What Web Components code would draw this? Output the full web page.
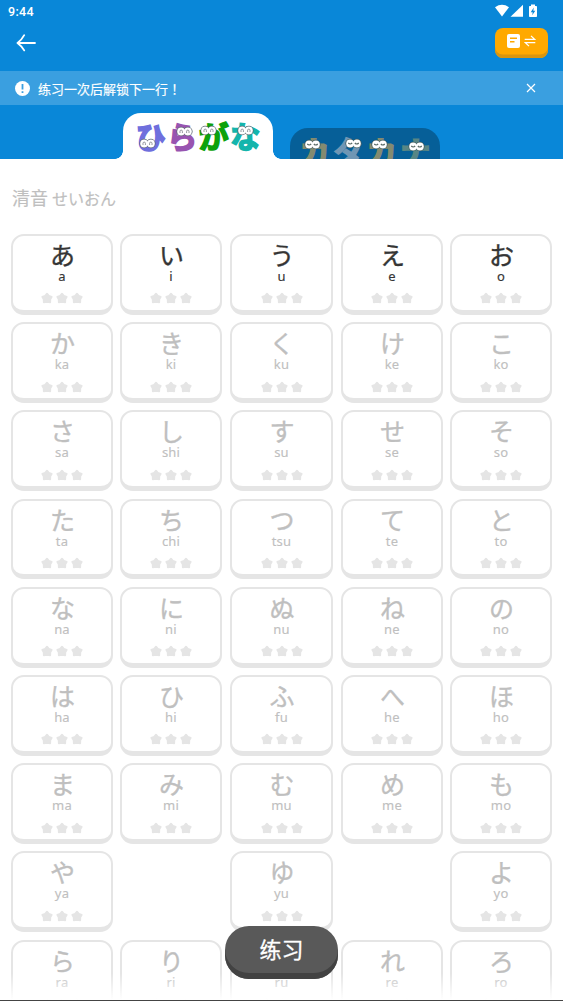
<!DOCTYPE html>
<html lang="zh-CN">
<head>
<meta charset="utf-8">
<title>五十音</title>
<style>
    html, body {
        margin: 0;
        height: 1001px;
        overflow: hidden;
        background: #fff;
        font-family: "Noto Sans", "Noto Sans CJK SC", sans-serif;
    }
</style>
</head>
<body>
<kana-app></kana-app>

<script>
    function define(name, html, setup) {
        var template = document.createElement('template');
        template.innerHTML = html;
        customElements.define(name, class extends HTMLElement {
            constructor() {
                super();
                this.attachShadow({mode: 'open'}).appendChild(template.content.cloneNode(true));
            }
            connectedCallback() {
                if (setup) {
                    setup(this, this.shadowRoot);
                }
            }
        });
    }

    define('status-bar', `
        <style>
            :host {
                display: flex;
                justify-content: space-between;
                height: 24px;
                padding: 0 24px 0 8px;
                color: #fff;
                font: 500 12.5px/24px Roboto, sans-serif;
                letter-spacing: .35px;
            }
            svg { display: block; margin-top: 4px; }
        </style>
        <span>9:44</span>
        <svg width="44" height="14" viewBox="0 0 44 14" fill="#fff">
            <path d="M0 3.3Q7 -1.6 14 3.3L7 12.4Z"/>
            <path d="M28 .8V12.8H15.5Z"/>
            <path d="M36 .4h4v1.5h1.2q.8 0 .8.8v9.5q0 .8-.8.8h-6.4q-.8 0-.8-.8V2.7q0-.8.8-.8H36z"/>
            <path d="M38.8 3.6l-3.1 4.6h2l-.5 3 3.1-4.4h-2z" fill="#0987d8"/>
        </svg>
    `);

    define('nav-bar', `
        <style>
            :host {
                display: flex;
                justify-content: space-between;
                align-items: flex-start;
                height: 47px;
                padding: 0 15px 0 16px;
                box-sizing: border-box;
            }
            .back { margin-top: 10px; }
            .switch {
                display: flex;
                align-items: center;
                justify-content: center;
                gap: 4px;
                width: 53px;
                height: 30px;
                margin-top: 4px;
                padding-bottom: 5px;
                box-sizing: border-box;
                border-radius: 8px;
                background: #ffa900;
                box-shadow: inset 0 -3.5px #d8950f;
            }
            svg { display: block; }
        </style>
        <svg class="back" width="21" height="18" viewBox="0 0 21 18" fill="none" stroke="#fff" stroke-width="1.8" stroke-linecap="round" stroke-linejoin="round">
            <path d="M19 9H1.5M8.2 1.2Q5.8 5.8 1.5 9Q5.8 12.2 8.2 16.4"/>
        </svg>
        <div class="switch">
            <svg width="13" height="14" viewBox="0 0 13 14">
                <rect width="13" height="14" rx="2" fill="#fff"/>
                <path d="M3 4.2h7M3 7.8h4.5" stroke="#ffa900" stroke-width="1.4"/>
            </svg>
            <svg width="12" height="12" viewBox="0 0 12 12" fill="none" stroke="#fff" stroke-width="1.3">
                <path d="M.7 4.4H10.7L7 .9M11.3 7.6H1.3L5 11.1"/>
            </svg>
        </div>
    `);

    define('notice-bar', `
        <style>
            :host {
                display: flex;
                align-items: center;
                height: 34px;
                padding: 0 27px 0 15px;
                background: #3a9fe0;
                color: #fff;
                font: 400 13px/33px "Noto Sans CJK SC", sans-serif;
                -webkit-text-stroke: .15px #fff;
            }
            .text { flex: 1; margin-left: 8px; }
            svg { display: block; }
        </style>
        <svg width="15" height="15" viewBox="0 0 15 15">
            <circle cx="7.5" cy="7.5" r="7.5" fill="#fff"/>
            <path d="M7.5 3v5.6M7.5 10.2v1.8" stroke="#3a9fe0" stroke-width="1.8"/>
        </svg>
        <span class="text"><slot></slot></span>
        <svg width="10" height="10" viewBox="0 0 10 10" stroke="#fff" stroke-width="1.2">
            <path d="M1 1l8 8M9 1l-8 8"/>
        </svg>
    `);

    // one character of a tab title with a pair of eyes on it
    define('eyed-char', `
        <style>
            :host {
                display: block;
                position: relative;
                width: 31.5px;
                text-align: center;
                -webkit-text-stroke: 1.6px currentColor;
                stroke-linejoin: round;
            }
            svg { position: absolute; overflow: visible; }
        </style>
        <slot></slot>
        <svg width="15" height="9" viewBox="0 0 15 9">
            <g class="ring" stroke-width="1.6"><circle cx="4.1" cy="4.5" r="3.9"/><circle cx="10.9" cy="4.5" r="3.9"/></g>
            <g fill="#fff"><circle cx="4.1" cy="4.5" r="3.9"/><circle cx="10.9" cy="4.5" r="3.9"/></g>
            <path class="pupil" fill="none"/>
        </svg>
    `, function (host, root) {
        var svg = root.querySelector('svg');
        var closed = host.hasAttribute('closed');
        var pupil = root.querySelector('.pupil');
        svg.style.left = host.getAttribute('eye-x') + 'px';
        svg.style.top = host.getAttribute('eye-y') + 'px';
        root.querySelector('.ring').setAttribute('stroke', closed ? '#3f5a5c' : '#5a6570');
        pupil.setAttribute('stroke', closed ? '#5c6c68' : '#7b8087');
        pupil.setAttribute('stroke-width', closed ? '1.1' : '.8');
        pupil.setAttribute('d', closed
            ? 'M2.2 4Q4.2 6 6.2 4M8.8 4Q10.8 6 12.8 4'
            : 'M3 6V4.3a1.2 1.2 0 0 1 2.4 0V6M9.6 6V4.3a1.2 1.2 0 0 1 2.4 0V6');
    });

    define('kana-tabs', `
        <style>
            :host {
                display: flex;
                align-items: flex-end;
                gap: 17px;
                height: 54px;
                padding-left: 123px;
                overflow: hidden;
                font: 700 30px/43px "Noto Sans CJK JP", sans-serif;
            }
            .tab {
                display: flex;
                justify-content: center;
                width: 150px;
                box-sizing: border-box;
            }
            .active {
                position: relative;
                height: 46px;
                padding-top: 1px;
                border-radius: 18px 18px 0 0;
                background: #fff;
            }
            .active::before, .active::after {
                content: "";
                position: absolute;
                bottom: 0;
                width: 8px;
                height: 8px;
            }
            .active::before { left: -8px; background: radial-gradient(circle at 0 0, transparent 7.5px, #fff 8px); }
            .active::after { right: -8px; background: radial-gradient(circle at 100% 0, transparent 7.5px, #fff 8px); }
            .rest {
                height: 31px;
                padding-top: 3px;
                border-radius: 18px 18px 0 0;
                background: #065f98;
                overflow: hidden;
                line-height: 38px;
            }
            .rest eyed-char { width: 33.5px; }
        </style>
        <div class="tab active">
            <eyed-char style="color:#6f6fdd" eye-x="4.5" eye-y="24.5">ひ</eyed-char>
            <eyed-char style="color:#9854b0" eye-x="10" eye-y="13">ら</eyed-char>
            <eyed-char style="color:#0ca20c" eye-x="3" eye-y="12">が</eyed-char>
            <eyed-char style="color:#14b5ac" eye-x="8" eye-y="12">な</eyed-char>
        </div>
        <div class="tab rest">
            <eyed-char closed style="color:#848b70" eye-x="7" eye-y="9">カ</eyed-char>
            <eyed-char closed style="color:#7096b4" eye-x="14.5" eye-y="7.5">タ</eyed-char>
            <eyed-char closed style="color:#848b70" eye-x="7" eye-y="9">カ</eyed-char>
            <eyed-char closed style="color:#588685" eye-x="10" eye-y="10.5">ナ</eyed-char>
        </div>
    `);

    define('star-row', `
        <style>
            :host { display: flex; justify-content: center; gap: 3px; }
            svg { display: block; }
        </style>
    `, function (host, root) {
        for (var i = 0; i < 3; i++) {
            root.innerHTML += `
                <svg width="12" height="12" viewBox="0 0 12 12" fill="#e5e5e5" stroke="#e5e5e5" stroke-width="1.8" stroke-linejoin="round">
                    <path d="M6 1.6L7.9 3.9L10.7 4.9L9.3 7.4L9.2 10.3L6 9.9L2.8 10.3L2.7 7.4L1.3 4.9L4.1 3.9Z"/>
                </svg>`;
        }
    });

    define('kana-card', `
        <style>
            :host {
                display: block;
                width: 102px;
                height: 80.8px;
                box-sizing: border-box;
                border: 2px solid #e5e5e5;
                border-bottom-width: 5px;
                border-radius: 13px;
                background: #fff;
                color: #bfbfbf;
                text-align: center;
            }
            :host([open]) { color: #353535; }
            :host([wide]) { width: 103px; }
            .kana {
                height: 33px;
                padding-left: 1px;
                font: 400 25px/36px "Noto Sans CJK JP", sans-serif;
                -webkit-text-stroke: .35px currentColor;
            }
            .romaji {
                height: 23.4px;
                font: 400 13px/14px "Noto Sans", sans-serif;
                -webkit-text-stroke: .15px currentColor;
                letter-spacing: .2px;
            }
        </style>
        <div class="kana"></div>
        <div class="romaji"></div>
        <star-row></star-row>
    `, function (host, root) {
        root.querySelector('.kana').textContent = host.getAttribute('kana');
        root.querySelector('.romaji').textContent = host.getAttribute('romaji');
    });

    define('kana-grid', `
        <style>
            :host {
                display: grid;
                grid-template-columns: 109px 110px 111px 109px 102px;
                row-gap: 7.4px;
                padding: 0 11px;
            }
        </style>
    `, function (host, root) {
        var rows = [
            'あ a い i う u え e お o',
            'か ka き ki く ku け ke こ ko',
            'さ sa し shi す su せ se そ so',
            'た ta ち chi つ tsu て te と to',
            'な na に ni ぬ nu ね ne の no',
            'は ha ひ hi ふ fu へ he ほ ho',
            'ま ma み mi む mu め me も mo',
            'や ya - - ゆ yu - - よ yo',
            'ら ra り ri る ru れ re ろ ro'
        ];
        rows.forEach(function (row, index) {
            var parts = row.split(' ');
            for (var i = 0; i < parts.length; i += 2) {
                var cell = document.createElement(parts[i] === '-' ? 'span' : 'kana-card');
                cell.setAttribute('kana', parts[i]);
                cell.setAttribute('romaji', parts[i + 1]);
                if (index === 0) {
                    cell.setAttribute('open', '');
                }
                if (i === 4) {
                    cell.setAttribute('wide', '');
                }
                root.appendChild(cell);
            }
        });
    });

    define('practice-button', `
        <style>
            :host {
                display: block;
                width: 113px;
                height: 53px;
                box-sizing: border-box;
                border-radius: 24px;
                background: #595959;
                box-shadow: inset 0 -6px #424242;
                color: #fff;
                font: 400 22px/45px "Noto Sans CJK SC", sans-serif;
                -webkit-text-stroke: .3px #fff;
                text-align: center;
            }
        </style>
        <slot></slot>
    `);

    define('kana-app', `
        <style>
            :host {
                display: block;
                position: relative;
                width: 563px;
                height: 1001px;
                overflow: hidden;
            }
            header { height: 159px; background: #0987d8; }
            h1 {
                height: 75px;
                margin: 0;
                padding: 0 12px;
                color: #bfbfbf;
                font: 400 18px/77px "Noto Sans CJK SC", sans-serif;
                -webkit-text-stroke: .2px currentColor;
            }
            small { font: 400 16px/1 "Noto Sans CJK JP", sans-serif; }
            .mark { font-family: "Noto Sans CJK JP", sans-serif; }
            .fade {
                position: absolute;
                left: 0;
                right: 0;
                bottom: 0;
                height: 28px;
                box-sizing: border-box;
                border-bottom: 1px solid #444;
                background: linear-gradient(rgba(255, 255, 255, 0), #fff);
            }
            practice-button { position: absolute; left: 225px; top: 926px; }
        </style>
        <header>
            <status-bar></status-bar>
            <nav-bar></nav-bar>
            <notice-bar>练习一次后解锁下一行<span class="mark" lang="ja">！</span></notice-bar>
            <kana-tabs></kana-tabs>
        </header>
        <h1>清音 <small>せいおん</small></h1>
        <kana-grid></kana-grid>
        <div class="fade"></div>
        <practice-button>练习</practice-button>
    `);
</script>
</body>
</html>
